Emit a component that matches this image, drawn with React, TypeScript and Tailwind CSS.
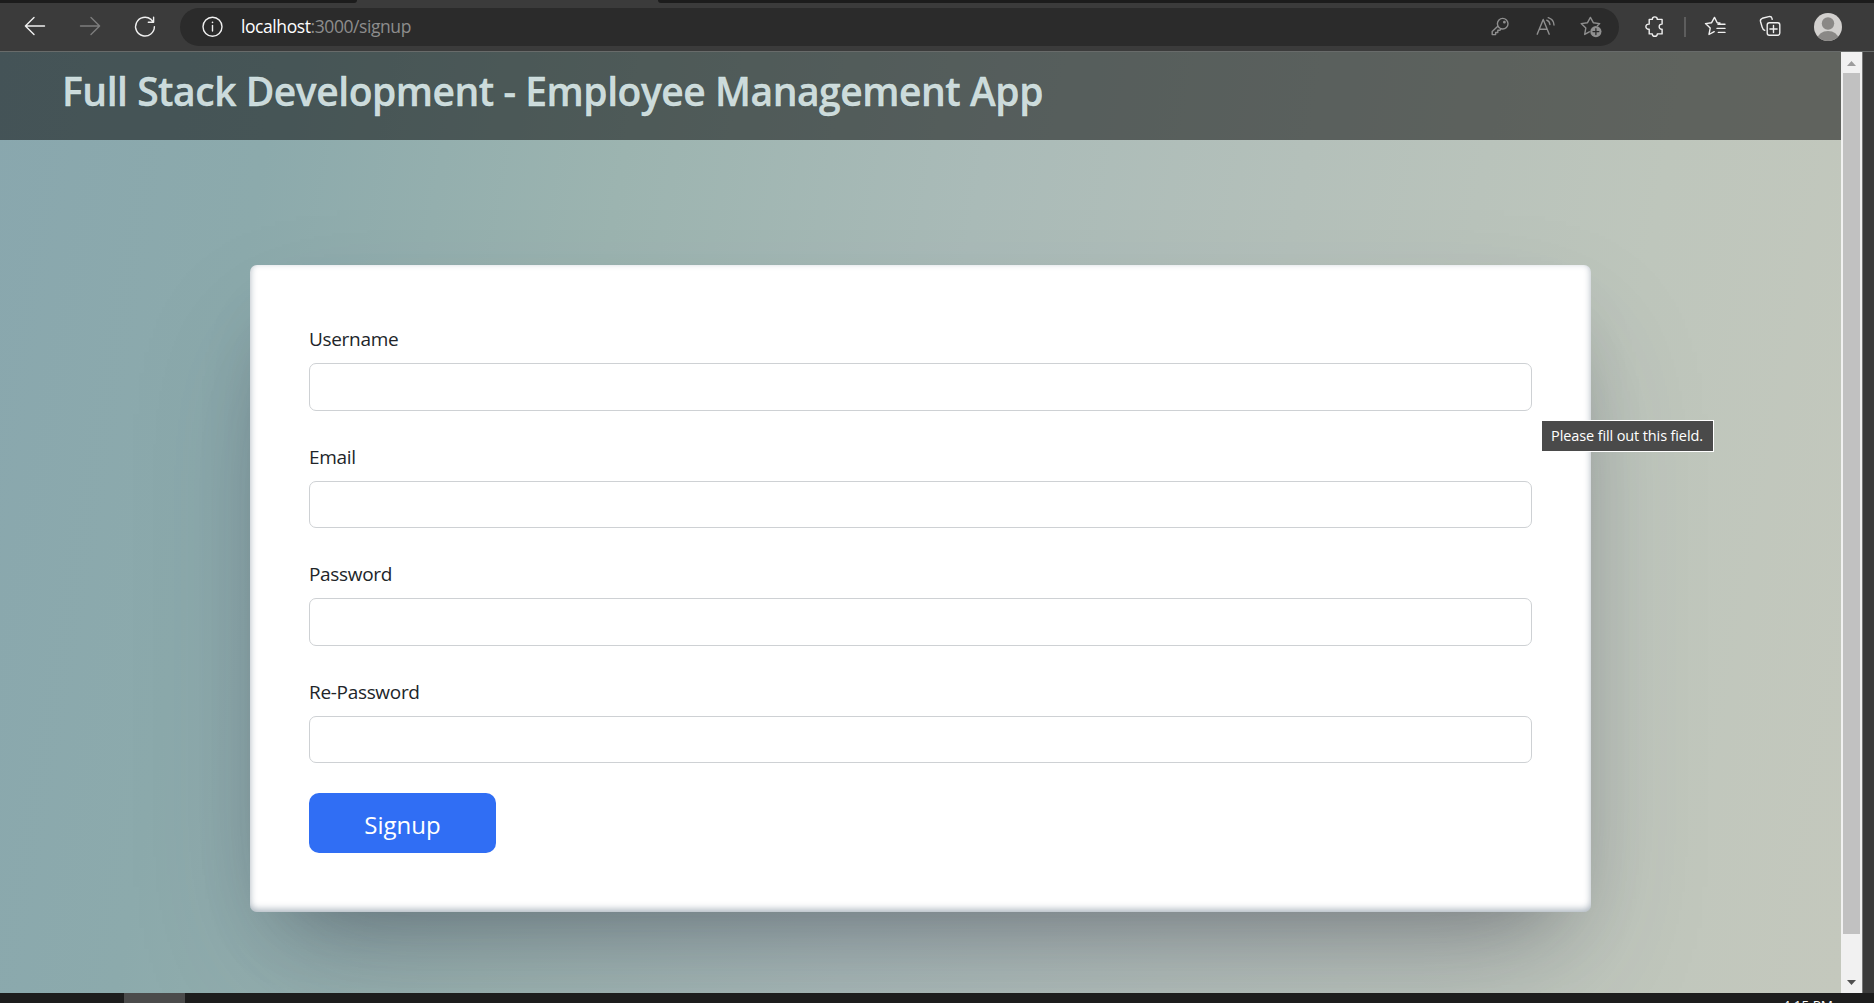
import type { ReactNode } from "react";

function Icon({ className, children }: { className: string; children: ReactNode }) {
  return (
    <svg
      viewBox="0 0 28 28"
      className={"h-7 w-7 shrink-0 " + className}
      fill="none"
      stroke="currentColor"
      strokeWidth="1.4"
      strokeLinecap="round"
      strokeLinejoin="round"
    >
      {children}
    </svg>
  );
}

function TabStrip() {
  return (
    <div className="flex h-[3px] shrink-0 bg-[#3b3b3b]">
      <div className="w-[357px] rounded-br-[4px] bg-[#1c1c1c]" />
      <div className="w-[301px]" />
      <div className="flex-1 rounded-bl-[4px] bg-[#1c1c1c]" />
    </div>
  );
}

function AddressBar() {
  return (
    <div className="ml-[21px] flex h-[38px] w-[1439px] shrink-0 items-center rounded-full bg-[#2b2b2b]">
      <Icon className="ml-[18px] text-[#f0f0f0]">
        <circle cx="14.5" cy="13.7" r="9.5" />
        <path d="M14.5 12.4v5.6" />
        <circle cx="14.5" cy="9.4" r="0.8" fill="currentColor" stroke="none" />
      </Icon>
      <div className="ml-[15px] pb-[2px] font-['Open_Sans',sans-serif] text-[17.5px] leading-7 tracking-[-0.42px] text-[#8d8d8d]">
        <span className="text-white">localhost</span>:3000/signup
      </div>
      <Icon className="mr-[18px] ml-auto text-[#8f8f8f]">
        <circle cx="16.7" cy="10.7" r="5.3" />
        <circle cx="18.4" cy="9.2" r="0.7" fill="currentColor" />
        <path d="M11.8 13.2 6.2 18.6v3h3.4v-2.1h2.2v-2.2h2.1l1.2-1.6" />
      </Icon>
      <Icon className="mr-[17px] text-[#8f8f8f]">
        <path d="M5.2 21.2 11.2 6.4l6 14.8M7.4 16.2h7.7" />
        <path d="M14.7 7.2c1.8.7 3 2.3 3.2 4.3M16.2 4.6c3.5 1 5.6 3.8 5.8 7.4" />
      </Icon>
      <Icon className="mr-[14px] text-[#8f8f8f]">
        <path d="M12.3 18.8 7.7 21.4l1.1-6.3L4.2 10.6l6.3-.9L13.4 4.4l2.9 5.3 6.4.9-2.3 2.2" />
        <circle cx="18.9" cy="18.6" r="5.6" fill="currentColor" stroke="none" />
        <path d="M18.9 15.7v5.8M16 18.6h5.8" stroke="#2b2b2b" strokeWidth="1.3" />
      </Icon>
    </div>
  );
}

function Toolbar() {
  return (
    <div className="flex h-[49px] shrink-0 items-center border-b border-[#686b6a] bg-[#3b3b3b]">
      <Icon className="ml-[21px] text-[#f0f0f0]">
        <path d="M23.5 13H4.4M13 4.4 4.4 13l8.6 8.6" />
      </Icon>
      <Icon className="ml-[27px] text-[#7d7d7d]">
        <path d="M4.5 13h19M15 4.4l8.6 8.6-8.6 8.6" />
      </Icon>
      <Icon className="ml-[27px] text-[#f0f0f0]">
        <path d="M23.4 13.6a9.4 9.4 0 1 1-3.4-7.2l2.4 2.5M22.6 4.2v5h-5.3" />
      </Icon>
      <AddressBar />
      <Icon className="ml-[21px] text-[#f0f0f0]">
        <path d="M9.2 6.4h3.1c0-3.4 5-3.4 5 0h4.8v4.7c-3.9-.3-3.9 5.5 0 5.2v4.6h-4.8c0 3.2-5 3.2-5 0H9.2v-4.6c-4.4.4-4.4-5.6 0-5.2Z" />
      </Icon>
      <div className="ml-[16px] h-5 w-[2px] bg-[#5d5d5d]" />
      <Icon className="ml-[15px] text-[#f0f0f0]">
        <path d="m13.2 18.7-5.2 2.8 1.2-6.4-4.7-4.5 6.1-.9 2.9-5.3 2.7 5.3 2.7.3M17 11.2h7M16 15.4h8M17.3 19.4H24" />
      </Icon>
      <Icon className="ml-[27px] text-[#f0f0f0]">
        <rect x="11.2" y="9.7" width="12.6" height="12.6" rx="2.2" />
        <path d="M17.5 12.4v7.2M13.9 16h7.2M8.7 17.3C7 16.8 6.5 15.4 6.1 14L4.5 8.5c-.4-1.6.3-2.7 1.8-3.2l6.5-1.7c1.6-.4 2.8.3 3.2 1.8l.2.9" />
      </Icon>
      <svg viewBox="0 0 28 28" className="ml-[30px] h-7 w-7 shrink-0">
        <clipPath id="avatar">
          <circle cx="14" cy="14" r="14" />
        </clipPath>
        <g clipPath="url(#avatar)">
          <rect width="28" height="28" fill="#d2d0ce" />
          <circle cx="14" cy="10.5" r="6.2" fill="#8a8886" />
          <ellipse cx="14" cy="26" rx="10.4" ry="8" fill="#8a8886" />
        </g>
      </svg>
    </div>
  );
}

function Field({ label, type }: { label: string; type: string }) {
  return (
    <label className="mb-[29px] block">
      <span className="block h-[41px] text-[19px] leading-[34px] tracking-[-0.32px] text-[#212529]">{label}</span>
      <input
        type={type}
        className="block h-[47.5px] w-full rounded-[7px] border border-[#ced1d4] bg-white px-4 outline-none"
      />
    </label>
  );
}

function SignupCard() {
  return (
    <form className="mx-auto mt-[125px] h-[647px] w-[1341px] rounded-[7px] bg-white px-[59px] pt-[57px] shadow-[0_62px_125px_-25px_rgba(50,50,93,0.25),0_37px_75px_-37px_rgba(0,0,0,0.3),inset_0_-2.5px_7.5px_0_rgba(10,37,64,0.35)]">
      <Field label="Username" type="text" />
      <Field label="Email" type="email" />
      <Field label="Password" type="password" />
      <Field label="Re-Password" type="password" />
      <button
        type="button"
        className="mt-[30px] block h-[60px] w-[187px] rounded-[10px] bg-[#306ef4] pt-[4px] text-[24px] text-white"
      >
        Signup
      </button>
    </form>
  );
}

function Scrollbar() {
  return (
    <div className="flex w-[22px] shrink-0 flex-col items-center border-r border-[#777] bg-[#f1f1f1]">
      <svg viewBox="0 0 21 21" className="h-[21px] w-[21px] shrink-0" fill="#9c9c9c">
        <path d="m6 14 4.5-5 4.5 5Z" />
      </svg>
      <div className="h-[861px] w-[17px] bg-[#c1c1c1]" />
      <svg viewBox="0 0 21 21" className="mt-auto h-[21px] w-[21px] shrink-0" fill="#505050">
        <path d="m6 8 4.5 5L15 8Z" />
      </svg>
    </div>
  );
}

export default function App() {
  return (
    <div className="flex h-[1003px] w-[1874px] flex-col overflow-hidden bg-[#1d1d1d] font-['Open_Sans',sans-serif]">
      <TabStrip />
      <Toolbar />
      <div className="flex h-[941px] shrink-0 bg-[#3b3b3b]">
        <main className="relative w-[1841px] overflow-hidden bg-[linear-gradient(100deg,#89a7ae_0%,#8caaac_14%,#9cb4b0_32%,#aabbb8_50%,#b4c0ba_66%,#bec6bc_84%,#c4c8bd_100%)]">
          <header className="h-[88px] bg-black/50 pl-[62px]">
            <h1 className="text-[39px] leading-[78px] font-[650] tracking-[-0.46px] whitespace-nowrap text-[#dfeeee]/90 [-webkit-text-stroke:0.4px_rgba(223,238,238,0.8)]">
              Full Stack Development - Employee Management App
            </h1>
          </header>
          <SignupCard />
          <div className="absolute top-[368px] left-[1542px] flex h-[32px] w-[172px] items-center justify-center border border-l-0 border-white bg-[#4a4a4a] pr-px text-[14.5px] tracking-[-0.12px] whitespace-nowrap text-white">
            Please fill out this field.
          </div>
        </main>
        <Scrollbar />
      </div>
      <footer className="flex h-[10px] shrink-0 items-start justify-between overflow-hidden">
        <div className="ml-[124px] h-[10px] w-[61px] bg-[#4b4b4b]" />
        <div className="mt-[2px] mr-[41px] text-[13.5px] leading-5 text-white">4:15 PM</div>
      </footer>
    </div>
  );
}
